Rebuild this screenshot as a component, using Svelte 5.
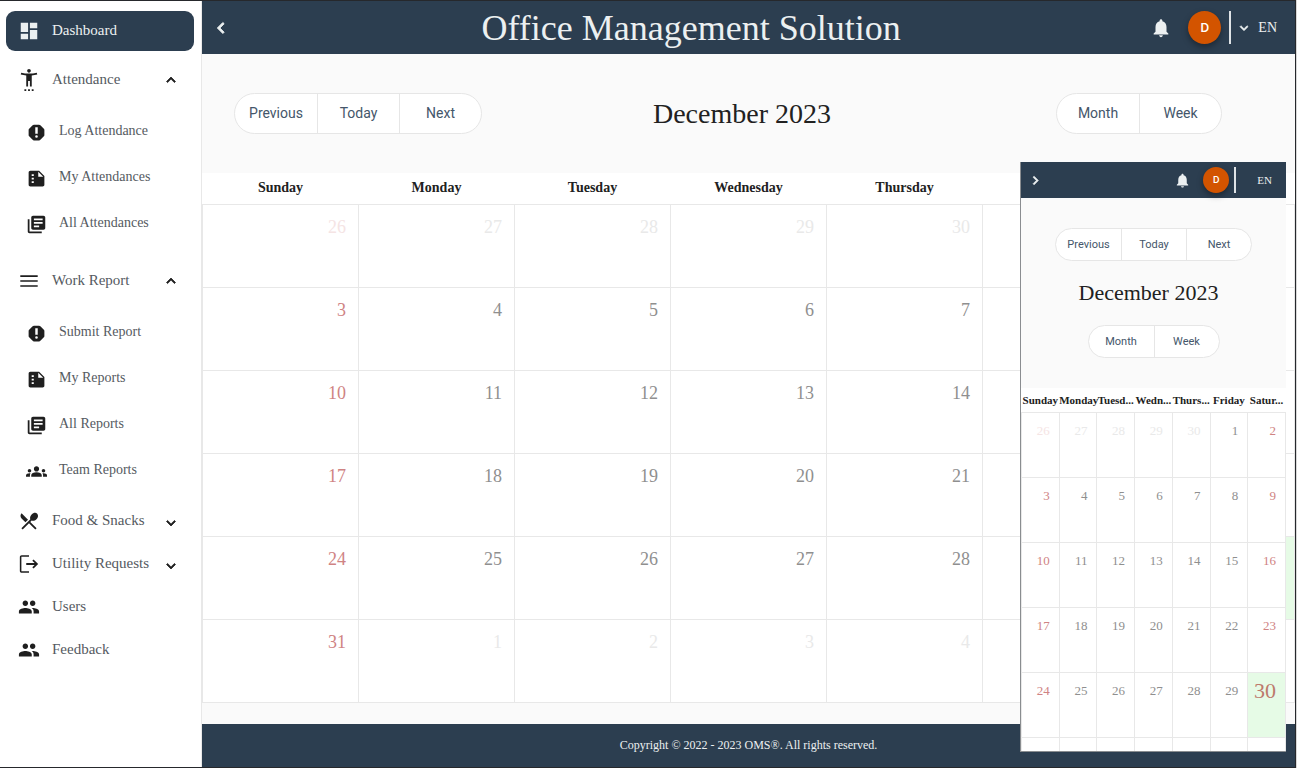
<script>
  const icons = {
    dashboard: 'M3 13h8V3H3v10zm0 8h8v-6H3v6zm10 0h8V11h-8v10zm0-18v6h8V3h-8z',
    person: 'M20.5 4c-2.61.7-5.67 1-8.5 1s-5.89-.3-8.5-1L3 6c1.86.5 4 .83 6 1v12h2v-6h2v6h2V7c2-.17 4.14-.5 6-1l-.5-2zM12 4c1.1 0 2-.9 2-2s-.9-2-2-2-2 .9-2 2 .9 2 2 2zM7 24h2v-2H7v2zm4 0h2v-2h-2v2zm4 0h2v-2h-2v2z',
    report: 'M15 3H9Q8.300 3 7.600 3.600L3.600 7.600Q3 8.300 3 9v6q0 .7.600 1.400l4 4Q8.300 21 9 21h6q.7 0 1.400-.6l4-4Q21 15.700 21 15V9q0-.7-.6-1.400l-4-4Q15.700 3 15 3zM12 18a1.500 1.500 0 1 1 0-3 1.500 1.500 0 0 1 0 3zm1.400-4.500h-2.800V6h2.800z',
    summary: 'M15 3H5c-1.100 0-1.990.9-1.990 2L3 19c0 1.100.89 2 1.990 2H19c1.100 0 2-.9 2-2V9l-6-6zM6.500 7h2.400v2.200H6.500zm0 4h2.400v2.200H6.500zm0 4h2.400v2.200H6.500zM14 10V4.300l5.700 5.700H14z',
    library: 'M4 6H2v14c0 1.100.9 2 2 2h14v-2H4V6zm16-4H8c-1.100 0-2 .9-2 2v12c0 1.100.9 2 2 2h12c1.100 0 2-.9 2-2V4c0-1.100-.9-2-2-2zm-1 9H9V9h10v2zm-4 4H9v-2h6v2zm4-8H9V5h10v2z',
    lines: 'M2.500 5.700h19v1.800h-19zM2.500 11.100h19v1.800h-19zM2.500 16.500h19v1.800h-19z',
    groups: 'M12 12.750c1.630 0 3.070.39 4.240.9 1.080.48 1.760 1.560 1.760 2.730V18H6v-1.610c0-1.180.68-2.260 1.760-2.730 1.170-.52 2.610-.91 4.240-.91zM4 13c1.100 0 2-.9 2-2s-.9-2-2-2-2 .9-2 2 .9 2 2 2zm1.130 1.100C4.760 14.040 4.390 14 4 14c-.99 0-1.930.21-2.780.58C.48 14.900 0 15.620 0 16.430V18h4.500v-1.610c0-.83.23-1.610.63-2.290zM20 13c1.100 0 2-.9 2-2s-.9-2-2-2-2 .9-2 2 .9 2 2 2zm4 3.430c0-.81-.48-1.530-1.220-1.850C21.930 14.210 20.990 14 20 14c-.39 0-.76.04-1.130.1.400.68.630 1.460.630 2.290V18H24v-1.570zM12 6c1.660 0 3 1.340 3 3s-1.340 3-3 3-3-1.340-3-3 1.340-3 3-3z',
    food: 'M8.100 13.340l2.830-2.830L3.910 3.500c-1.560 1.560-1.560 4.090 0 5.660l4.190 4.180zm6.780-1.810c1.530.71 3.680.21 5.270-1.380 1.910-1.910 2.280-4.650.81-6.120-1.460-1.460-4.200-1.100-6.120.81-1.590 1.590-2.090 3.740-1.380 5.270L3.700 19.870l1.410 1.410L12 14.410l6.880 6.880 1.410-1.410L13.410 13l1.470-1.470z',
    exit: 'M17 7l-1.410 1.410L18.170 11H9v2h9.170l-2.580 2.580L17 17l5-5zM4 4h8V2.500H4c-1.100 0-2 .9-2 2v15c0 1.100.9 2 2 2h8V20H3.700V4z',
    people: 'M16 11c1.660 0 2.990-1.340 2.990-3S17.660 5 16 5s-3 1.340-3 3 1.340 3 3 3zm-8 0c1.660 0 2.990-1.340 2.990-3S9.660 5 8 5 5 6.340 5 8s1.340 3 3 3zm0 2c-2.330 0-7 1.170-7 3.500V19h14v-2.500c0-2.330-4.670-3.500-7-3.500zm8 0c-.29 0-.62.02-.97.05 1.160.84 1.970 1.970 1.970 3.450V19h6v-2.500c0-2.330-4.670-3.500-7-3.500z',
    bell: 'M12 22c1.100 0 2-.9 2-2h-4c0 1.100.9 2 2 2zm6-6v-5c0-3.070-1.640-5.640-4.500-6.320V4c0-.83-.67-1.500-1.500-1.500s-1.500.67-1.500 1.500v.68C7.630 5.360 6 7.920 6 11v5l-2 2v1h16v-1l-2-2z',
    up: 'M12 8l-6 6 1.410 1.410L12 10.830l4.590 4.580L18 14z',
    down: 'M16.590 8.590L12 13.170 7.410 8.590 6 10l6 6 6-6z',
    left: 'M15.410 7.410L14 6l-6 6 6 6 1.410-1.410L10.830 12z',
    right: 'M10 6L8.590 7.410 13.170 12l-4.580 4.590L10 18l6-6z'
  };

  const menu = [
    {
      label: 'Attendance',
      icon: 'person',
      children: [
        { label: 'Log Attendance', icon: 'report' },
        { label: 'My Attendances', icon: 'summary' },
        { label: 'All Attendances', icon: 'library' }
      ]
    },
    {
      label: 'Work Report',
      icon: 'lines',
      children: [
        { label: 'Submit Report', icon: 'report' },
        { label: 'My Reports', icon: 'summary' },
        { label: 'All Reports', icon: 'library' },
        { label: 'Team Reports', icon: 'groups' }
      ]
    },
    { label: 'Food & Snacks', icon: 'food', closed: true },
    { label: 'Utility Requests', icon: 'exit', closed: true },
    { label: 'Users', icon: 'people' },
    { label: 'Feedback', icon: 'people' }
  ];

  const wideDays = ['Sunday', 'Monday', 'Tuesday', 'Wednesday', 'Thursday', '', ''];
  const shortDays = ['Sunday', 'Monday', 'Tuesd...', 'Wedn...', 'Thurs...', 'Friday', 'Satur...'];

  // Six weeks, starting on Sunday 26 November 2023
  const weeks = Array.from({ length: 6 }, (_, w) =>
    Array.from({ length: 7 }, (_, d) => {
      const n = w * 7 + d - 4;
      return {
        day: n < 1 ? n + 30 : n > 31 ? n - 31 : n,
        other: n < 1 || n > 31,
        weekend: d === 0 || d === 6,
        today: n === 30
      };
    })
  );
</script>

{#snippet icon(name)}
  <svg class="icon" viewBox="0 0 24 24" aria-hidden="true"><path d={icons[name]} fill-rule="evenodd" /></svg>
{/snippet}

{#snippet toolbar()}
  <div class="toolbar">
    <div class="group">
      <button>Previous</button><button>Today</button><button>Next</button>
    </div>
    <h2>December 2023</h2>
    <div class="group">
      <button>Month</button><button>Week</button>
    </div>
  </div>
{/snippet}

<!-- Days are numbered in the first `cols` columns of the first `rows` weeks -->
{#snippet calendar(names, rows, cols)}
  <table>
    <thead>
      <tr>
        {#each names as name}<th scope="col">{name}</th>{/each}
      </tr>
    </thead>
    <tbody>
      {#each weeks as week, w}
        <tr>
          {#each week as c, d}
            <td class:other={c.other} class:weekend={c.weekend} class:today={c.today}>{w < rows && d < cols ? c.day : ''}</td>
          {/each}
        </tr>
      {/each}
    </tbody>
  </table>
{/snippet}

<div class="app">
  <nav class="sidebar">
    <a class="item active" href="#dashboard">{@render icon('dashboard')}<span>Dashboard</span></a>
    {#each menu as entry}
      {#if entry.children}
        <section>
          <button class="item">{@render icon(entry.icon)}<span>{entry.label}</span><i class="caret">{@render icon('up')}</i></button>
          <ul>
            {#each entry.children as child}
              <li><a class="item sub" href="#page">{@render icon(child.icon)}<span>{child.label}</span></a></li>
            {/each}
          </ul>
        </section>
      {:else if entry.closed}
        <button class="item">{@render icon(entry.icon)}<span>{entry.label}</span><i class="caret low">{@render icon('down')}</i></button>
      {:else}
        <a class="item" href="#page">{@render icon(entry.icon)}<span>{entry.label}</span></a>
      {/if}
    {/each}
  </nav>

  <main>
    <header class="bar">
      <button class="toggle" aria-label="Collapse menu">{@render icon('left')}</button>
      <h1>Office Management Solution</h1>
      <div class="tools">
        <button class="bell" aria-label="Notifications">{@render icon('bell')}</button>
        <button class="avatar">D</button>
        <span class="divider"></span>
        <button class="lang">{@render icon('down')}EN</button>
      </div>
    </header>
    {@render toolbar()}
    {@render calendar(wideDays, 6, 5)}
    <footer>Copyright © 2022 - 2023 OMS®. All rights reserved.</footer>
  </main>

  <div class="phone">
    <header class="bar">
      <button class="toggle" aria-label="Open menu">{@render icon('right')}</button>
      <div class="tools">
        <button class="bell" aria-label="Notifications">{@render icon('bell')}</button>
        <button class="avatar">D</button>
        <span class="divider"></span>
        <button class="lang">EN</button>
      </div>
    </header>
    {@render toolbar()}
    {@render calendar(shortDays, 5, 7)}
  </div>
</div>

<style>
  :global(body) {
    margin: 0;
    background: #d8d8d8;
  }
  .app,
  .app * {
    box-sizing: border-box;
  }
  .app {
    position: relative;
    display: flex;
    min-height: 100vh;
    margin-right: 1px;
    border: solid #26282c;
    border-width: 1px 1px 1px 0;
    background: #fff;
    color: #212121;
    font-family: "Liberation Serif", serif;
  }
  button {
    padding: 0;
    border: 0;
    background: none;
    color: inherit;
    font: inherit;
    cursor: pointer;
  }
  .icon {
    display: block;
    flex: none;
    width: 22px;
    height: 22px;
    fill: currentColor;
  }

  /* Side menu */
  .sidebar {
    flex: none;
    width: 202px;
    padding: 10px 7px 10px 6px;
    border-right: 1px solid #e8e8e8;
    color: #1f1f1f;
  }
  .item {
    display: flex;
    align-items: center;
    gap: 12px;
    width: 100%;
    height: 43px;
    padding: 0 14px 0 12px;
    font-size: 15px;
    line-height: 20px;
    text-align: left;
    text-decoration: none;
    color: inherit;
  }
  .item span {
    flex: 1;
    padding-bottom: 2px;
    color: #555a61;
  }
  .item.active {
    height: 40px;
    border-radius: 9px;
    background: #2c3e50;
    color: #ecf0f1;
  }
  .item.active span {
    color: #ecf0f1;
  }
  .item.sub {
    height: 46px;
    padding-left: 20px;
    font-size: 14px;
  }
  .item.sub .icon {
    width: 21px;
    height: 21px;
  }
  .caret .icon {
    width: 18px;
    height: 18px;
    stroke: currentColor;
  }
  .low {
    padding-top: 4px;
  }
  section {
    padding-top: 7px;
  }
  ul {
    margin: 0;
    padding: 8px 0 5px;
    list-style: none;
  }

  /* Main area */
  main {
    display: flex;
    flex: 1;
    flex-direction: column;
    min-width: 0;
    background: #fafafa;
  }
  .bar {
    display: flex;
    align-items: center;
    height: 53px;
    padding: 0 18px 0 8px;
    background: #2c3e50;
    color: #ecf0f1;
  }
  .toggle .icon {
    stroke: currentColor;
  }
  h1,
  h2 {
    margin: 0;
    font-weight: 400;
  }
  h1 {
    flex: 1;
    font-size: 36px;
    line-height: 44px;
    text-align: center;
  }
  .tools {
    display: flex;
    align-items: center;
  }
  .avatar {
    width: 33px;
    height: 33px;
    margin: 0 8px 0 16px;
    border-radius: 50%;
    background: #d35400;
    box-shadow: 0 3px 6px rgba(0, 0, 0, 0.35);
    color: #fff;
    font: 600 12px/33px Inter, sans-serif;
  }
  .divider {
    width: 2px;
    height: 33px;
    background: #dfe3e6;
  }
  .lang {
    display: flex;
    align-items: center;
    gap: 6px;
    padding-left: 5px;
    font-size: 14px;
  }
  .lang .icon {
    width: 16px;
    height: 16px;
    stroke: currentColor;
  }
  .toolbar {
    display: grid;
    grid-template-columns: auto 1fr auto;
    align-items: center;
    padding: 39px 73px 39px 32px;
  }
  .toolbar h2 {
    padding-right: 54px;
    font-size: 28px;
    line-height: 36px;
    text-align: center;
  }
  .group {
    display: flex;
    overflow: hidden;
    border: 1px solid #e6e6e6;
    border-radius: 21px;
    background: #fff;
  }
  .group button {
    width: 82px;
    height: 39px;
    color: #44566a;
    font: 14px/39px Roboto, sans-serif;
  }
  .group button + button {
    border-left: 1px solid #e6e6e6;
  }
  table {
    width: 100%;
    table-layout: fixed;
    border-collapse: collapse;
    background: #fff;
  }
  th {
    height: 31px;
    padding: 0;
    font-size: 14px;
    line-height: 16px;
    white-space: nowrap;
  }
  td {
    height: 83px;
    padding: 12px 12px 0 0;
    border: 1px solid #e8e8e8;
    color: #8f8f8f;
    font-size: 18px;
    line-height: 20px;
    text-align: right;
    vertical-align: top;
  }
  td.weekend {
    color: #cf8383;
  }
  td.other {
    color: #e9e9e9;
  }
  td.other.weekend {
    color: #f5e4e4;
  }
  td.today {
    background: #e6fbe6;
    color: #bd7a6c;
  }
  footer {
    margin-top: auto;
    background: #2c3e50;
    color: #ecf0f1;
    font-size: 12px;
    line-height: 43px;
    text-align: center;
  }

  /* Narrow-screen window floating over the page */
  .phone {
    position: absolute;
    top: 161px;
    right: 9px;
    bottom: 15px;
    width: 266px;
    overflow: hidden;
    border: solid #8a8d90;
    border-width: 0 0 1px 1px;
    background: #fff;
  }
  .phone .bar {
    justify-content: space-between;
    height: 36px;
    padding: 0 14px 0 6px;
  }
  .phone .bar .icon {
    width: 17px;
    height: 17px;
  }
  .phone .avatar {
    width: 26px;
    height: 26px;
    margin: 0 5px 0 12px;
    font-size: 9px;
    line-height: 26px;
  }
  .phone .divider {
    height: 26px;
  }
  .phone .lang {
    padding-left: 21px;
    font-size: 11px;
  }
  .phone .toolbar {
    display: flex;
    flex-direction: column;
    gap: 14px;
    padding: 30px 0;
    background: #fafafa;
  }
  .phone .toolbar h2 {
    padding-right: 10px;
    font-size: 22px;
  }
  .phone .group button {
    width: 65px;
    height: 31px;
    font-size: 11px;
    line-height: 31px;
  }
  .phone th {
    height: 24px;
    font-size: 11px;
  }
  .phone td {
    height: 65px;
    padding: 8px 9px 0 0;
    font-size: 13px;
  }
  .phone td.today {
    font-size: 22px;
  }
</style>
